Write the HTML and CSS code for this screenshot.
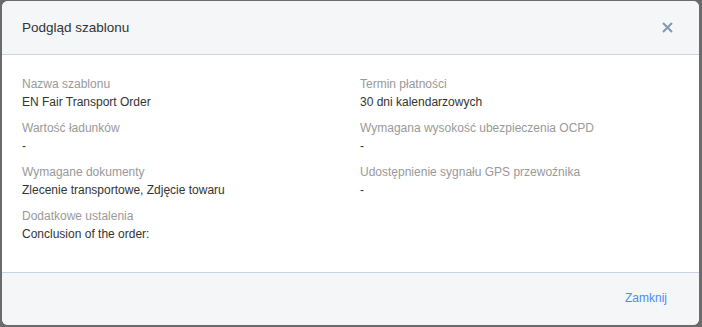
FILE: index.html
```html
<!DOCTYPE html>
<html lang="pl">

<head>
    <meta charset="UTF-8">
    <meta name="viewport" content="width=device-width, initial-scale=1.0">
    <title>Podgląd szablonu</title>
    <link rel="stylesheet" href="styles.css">
</head>

<body>
    <div class="overlay">
        <div class="modal">
            <div class="modal-header">
                <h3 class="modal-title">Podgląd szablonu</h3>
                <button class="close" aria-label="Zamknij">
                    <svg width="11" height="11" viewBox="0 0 11 11">
                        <path d="M1 1 L10 10 M10 1 L1 10" stroke="#8596b0" stroke-width="2" />
                    </svg>
                </button>
            </div>
            <div class="modal-body">
                <div class="field">
                    <div class="label">Nazwa szablonu</div>
                    <div class="value">EN Fair Transport Order</div>
                </div>
                <div class="field">
                    <div class="label">Termin płatności</div>
                    <div class="value">30 dni kalendarzowych</div>
                </div>
                <div class="field">
                    <div class="label">Wartość ładunków</div>
                    <div class="value">-</div>
                </div>
                <div class="field">
                    <div class="label">Wymagana wysokość ubezpieczenia OCPD</div>
                    <div class="value">-</div>
                </div>
                <div class="field">
                    <div class="label">Wymagane dokumenty</div>
                    <div class="value">Zlecenie transportowe, Zdjęcie towaru</div>
                </div>
                <div class="field">
                    <div class="label">Udostępnienie sygnału GPS przewoźnika</div>
                    <div class="value">-</div>
                </div>
                <div class="field">
                    <div class="label">Dodatkowe ustalenia</div>
                    <div class="value">Conclusion of the order:</div>
                </div>
            </div>
            <div class="modal-footer">
                <button class="btn-link">Zamknij</button>
            </div>
        </div>
    </div>
</body>

</html>
```

FILE: styles.css
```css
html,
body {
    margin: 0;
    padding: 0;
    height: 100%;
}

body {
    background-color: #6b6b6b;
    font-family: "Liberation Sans", Arial, sans-serif;
}

.overlay {
    padding: 1px 3px 0 2px;
}

.modal {
    background-color: #fff;
    border-radius: 6px;
    overflow: hidden;
    height: 324px;
    display: flex;
    flex-direction: column;
}

.modal-header {
    height: 53px;
    background-color: #f4f6f8;
    border-bottom: 1px solid #c9d4e0;
    display: flex;
    align-items: center;
    justify-content: space-between;
    padding: 0 26px 0 20px;
}

.modal-title {
    margin: 0;
    font-size: 13.5px;
    font-weight: normal;
    color: #333;
}

.close {
    border: 0;
    background: none;
    padding: 0;
    display: flex;
    cursor: pointer;
}

.modal-body {
    flex: 1;
    padding: 20px 20px 0 20px;
    display: grid;
    grid-template-columns: 338px 1fr;
    grid-auto-rows: 36px;
    row-gap: 8px;
}

.field .label {
    font-size: 12px;
    line-height: 18px;
    color: #999;
}

.field .value {
    font-size: 12px;
    line-height: 18px;
    color: #333;
}

.modal-footer {
    height: 53px;
    background-color: #f4f6f8;
    border-top: 1px solid #c9d4e0;
    display: flex;
    align-items: center;
    justify-content: flex-end;
    padding: 0 32px 3px 0;
    box-sizing: border-box;
}

.btn-link {
    border: 0;
    background: none;
    padding: 0;
    font-family: inherit;
    font-size: 12px;
    color: #4f8cf5;
    cursor: pointer;
}
```
